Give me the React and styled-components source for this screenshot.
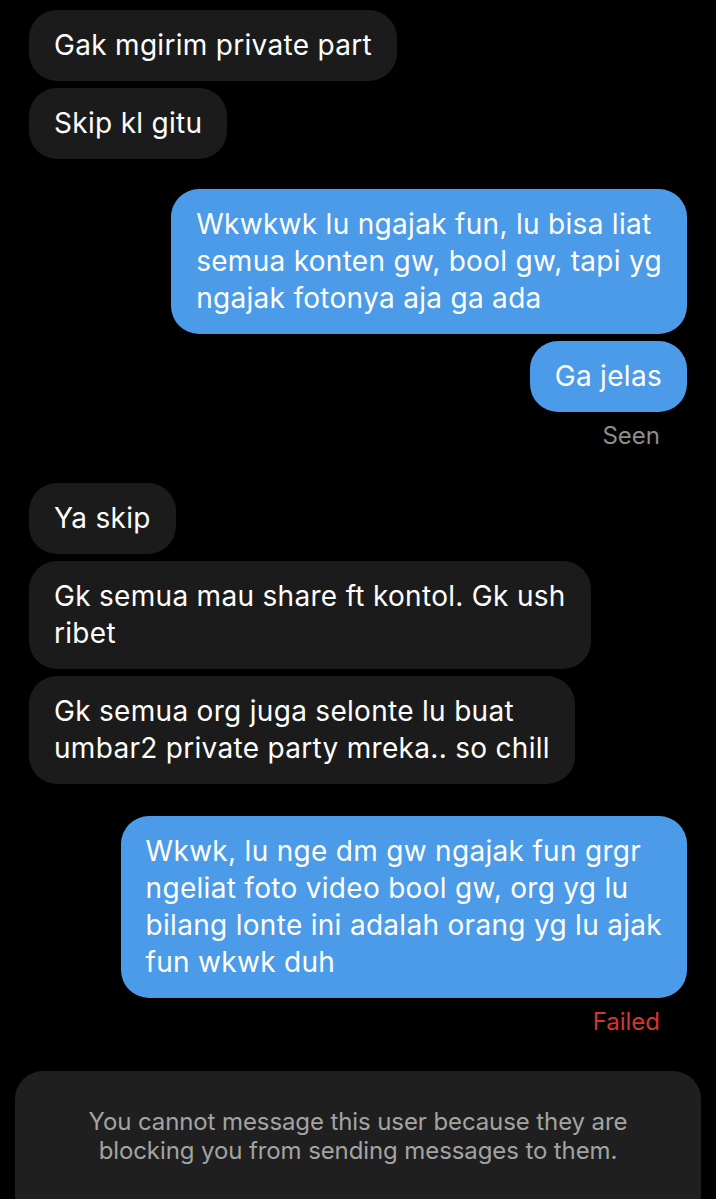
import React from "react";
import styled, { createGlobalStyle } from "styled-components";

const GlobalStyle = createGlobalStyle`
	html, body {
		margin: 0;
		padding: 0;
		background: #000;
	}
	body {
		font-family: Inter, "Noto Sans", "Liberation Sans", sans-serif;
		-webkit-font-smoothing: antialiased;
	}
`;

const Screen = styled.div`
	width: 716px;
	height: 1199px;
	overflow: hidden;
	background: #000;
	display: flex;
	flex-direction: column;
	padding: 10px 29px 0;
	box-sizing: border-box;
`;

const Group = styled.div`
	display: flex;
	flex-direction: column;
	align-items: ${(props) => (props.$mine ? "flex-end" : "flex-start")};
	gap: 7px;
	margin-top: ${(props) => props.$top || 0}px;
`;

const Bubble = styled.div`
	background: ${(props) => (props.$mine ? "#4c9be8" : "#1b1b1b")};
	color: #fff;
	font-size: 28px;
	line-height: 37px;
	letter-spacing: 0.3px;
	padding: 17px 25px;
	border-radius: 28px;
	white-space: nowrap;
`;

const Status = styled.div`
	font-size: 24px;
	line-height: 28px;
	margin-top: 3px;
	padding-right: 27px;
	color: ${(props) => (props.$failed ? "#d9342e" : "#8d8d8d")};
`;

const Notice = styled.div`
	margin: 35px -14px 0;
	flex: 1;
	background: #1f1f1f;
	border-radius: 28px 28px 0 0;
	padding: 36px 20px 0;
	text-align: center;
	color: #a3a3a3;
	font-size: 24px;
	line-height: 29px;
	letter-spacing: -0.1px;
`;

const groups = [
	{
		mine: false,
		top: 0,
		messages: [["Gak mgirim private part"], ["Skip kl gitu"]],
	},
	{
		mine: true,
		top: 30,
		messages: [
			[
				"Wkwkwk lu ngajak fun, lu bisa liat",
				"semua konten gw, bool gw, tapi yg",
				"ngajak fotonya aja ga ada",
			],
			["Ga jelas"],
		],
		status: "Seen",
	},
	{
		mine: false,
		top: 33,
		messages: [
			["Ya skip"],
			["Gk semua mau share ft kontol. Gk ush", "ribet"],
			["Gk semua org juga selonte lu buat", "umbar2 private party mreka.. so chill"],
		],
	},
	{
		mine: true,
		top: 32,
		messages: [
			[
				"Wkwk, lu nge dm gw ngajak fun grgr",
				"ngeliat foto video bool gw, org yg lu",
				"bilang lonte ini adalah orang yg lu ajak",
				"fun wkwk duh",
			],
		],
		status: "Failed",
	},
];

export default function App() {
	return (
		<>
			<GlobalStyle />
			<Screen>
				{groups.map((group, gi) => (
					<Group key={gi} $mine={group.mine} $top={group.top}>
						{group.messages.map((lines, mi) => (
							<Bubble key={mi} $mine={group.mine}>
								{lines.map((line, li) => (
									<React.Fragment key={li}>
										{li > 0 && <br />}
										{line}
									</React.Fragment>
								))}
							</Bubble>
						))}
						{group.status && (
							<Status $failed={group.status === "Failed"}>
								{group.status}
							</Status>
						)}
					</Group>
				))}
				<Notice>
					You cannot message this user because they are
					<br />
					blocking you from sending messages to them.
				</Notice>
			</Screen>
		</>
	);
}
